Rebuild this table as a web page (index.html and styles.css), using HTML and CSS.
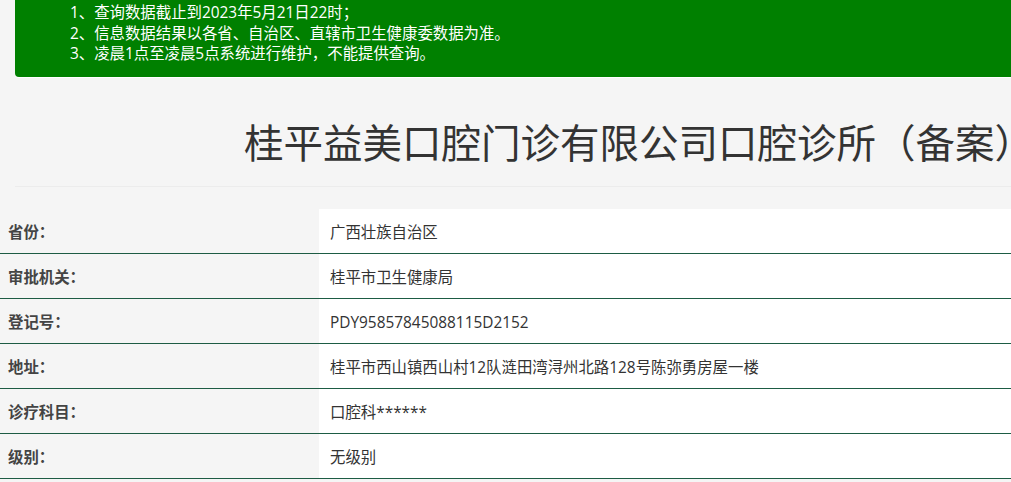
FILE: index.html
```html
<!DOCTYPE html>
<html lang="zh-CN">
<head>
<meta charset="utf-8">
<title>桂平益美口腔门诊有限公司口腔诊所（备案）</title>
<link rel="stylesheet" href="styles.css">
</head>
<body>
<div class="page">
  <div class="notice">
    <p>1、查询数据截止到2023年5月21日22时；</p>
    <p>2、信息数据结果以各省、自治区、直辖市卫生健康委数据为准。</p>
    <p>3、凌晨1点至凌晨5点系统进行维护，不能提供查询。</p>
  </div>
  <h1 class="title">桂平益美口腔门诊有限公司口腔诊所（备案）</h1>
  <div class="info">
    <div class="row"><div class="label">省份：</div><div class="value">广西壮族自治区</div></div>
    <div class="row"><div class="label">审批机关：</div><div class="value">桂平市卫生健康局</div></div>
    <div class="row"><div class="label">登记号：</div><div class="value">PDY95857845088115D2152</div></div>
    <div class="row"><div class="label">地址：</div><div class="value">桂平市西山镇西山村12队涟田湾浔州北路128号陈弥勇房屋一楼</div></div>
    <div class="row"><div class="label">诊疗科目：</div><div class="value">口腔科******</div></div>
    <div class="row"><div class="label">级别：</div><div class="value">无级别</div></div>
  </div>
</div>
</body>
</html>
```

FILE: styles.css
```css
html, body {
  margin: 0;
  padding: 0;
  background: #f5f5f5;
  overflow: hidden;
}
body {
  font-family: "Open Sans", "Noto Sans CJK SC", sans-serif;
  font-size: 15.4px;
  color: #333;
}
.page {
  width: 100%;
}
.notice {
  margin-left: 15px;
  background: #008000;
  color: #fff;
  padding: 3px 0 12px 55px;
  border-radius: 0 0 0 4px;
  box-shadow: 0 1px 0 #ffffff;
}
.notice p {
  margin: 0;
  line-height: 20.5px;
  font-size: 15.4px;
}
.title {
  margin: 0 0 0 15px;
  padding: 37px 0 18px 229px;
  font-family: "Noto Sans CJK SC", sans-serif;
  font-size: 39.5px;
  font-weight: normal;
  line-height: 54px;
  white-space: nowrap;
  overflow: hidden;
  color: #333;
  border-bottom: 1px solid #ececec;
}
.info {
  margin-top: 22px;
}
.row {
  display: flex;
  border-bottom: 1px solid #1d5c44;
}
.label {
  width: 319px;
  flex: none;
  padding: 4px 0 0 8px;
  box-sizing: border-box;
  font-weight: bold;
  color: #444;
  line-height: 40px;
}
.value {
  flex: 1;
  background: #fff;
  padding: 4px 0 0 11px;
  line-height: 40px;
  color: #333;
}
```
